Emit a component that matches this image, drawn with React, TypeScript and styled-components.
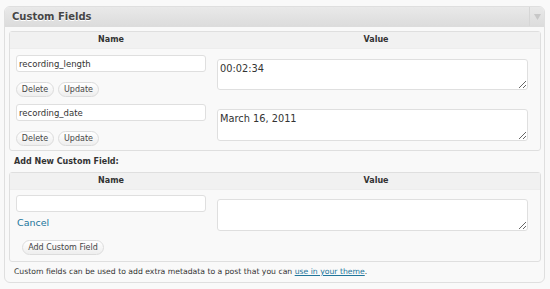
import React from "react";
import styled, { createGlobalStyle } from "styled-components";

const Global = createGlobalStyle`
  html, body { margin: 0; padding: 0; background: #f9f9f9; }
  body { font-family: "DejaVu Sans", Verdana, sans-serif; color: #333; }
`;

const Page = styled.div`
  width: 550px;
  height: 289px;
  padding: 6px 0 0 4px;
  box-sizing: border-box;
`;

const Postbox = styled.div`
  width: 541px;
  height: 277px;
  box-sizing: border-box;
  border: 1px solid #dfdfdf;
  border-radius: 6px;
  background: #f9f9f9;
  overflow: hidden;
  display: flex;
  flex-direction: column;
`;

const Header = styled.div`
  height: 20px;
  flex: none;
  display: flex;
  align-items: stretch;
  background: linear-gradient(#e9e9e9, #dcdcdc);
  border-bottom: 1px solid #dcdcdc;
  box-sizing: border-box;
`;

const Title = styled.h3`
  flex: 1;
  margin: 0;
  padding: 0 0 0 7px;
  font-size: 10px;
  font-weight: bold;
  color: #464646;
  line-height: 19px;
  text-shadow: 0 1px 0 #fff;
`;

const Toggle = styled.div`
  width: 15px;
  border-left: 1px solid #d6d6d6;
  display: flex;
  justify-content: center;
  padding-top: 7px;
  box-sizing: border-box;
`;

const Inside = styled.div`
  padding: 4px 3px 0 4px;
  display: flex;
  flex-direction: column;
`;

const Table = styled.div`
  border: 1px solid #dfdfdf;
  border-radius: 3px;
  background: #f9f9f9;
  display: flex;
  flex-direction: column;
`;

const HeadRow = styled.div`
  display: grid;
  grid-template-columns: 202px 1fr;
  height: 16px;
  background: #f1f1f1;
  border-bottom: 1px solid #ededed;
`;

const Th = styled.div`
  font-size: 8px;
  font-weight: bold;
  color: #333;
  line-height: 16px;
  text-align: center;
`;

const Row = styled.div<{ $pt: number; $h: number }>`
  display: grid;
  grid-template-columns: 202px 1fr;
  padding-top: ${(p) => p.$pt}px;
  height: ${(p) => p.$h}px;
  box-sizing: border-box;
`;

const NameCell = styled.div`
  padding-left: 6px;
  display: flex;
  flex-direction: column;
  align-items: flex-start;
`;

const ValueCell = styled.div<{ $pt: number }>`
  padding: ${(p) => p.$pt}px 0 0 5px;
`;

const TextInput = styled.input`
  width: 190px;
  height: 17px;
  box-sizing: border-box;
  border: 1px solid #dfdfdf;
  border-radius: 3px;
  background: #fff;
  font-family: "DejaVu Sans", sans-serif;
  font-size: 8.5px;
  color: #333;
  padding: 0 2px;
  margin: 0;
  outline: none;
`;

const TextArea = styled.textarea<{ $h: number }>`
  display: block;
  width: 311px;
  height: ${(p) => p.$h}px;
  box-sizing: border-box;
  border: 1px solid #dfdfdf;
  border-radius: 3px;
  background: #fff;
  font-family: "DejaVu Sans", sans-serif;
  font-size: 9.8px;
  color: #333;
  padding: 3px 2px;
  margin: 0;
  resize: both;
  outline: none;
`;

const Buttons = styled.div<{ $mt: number; $ml?: number }>`
  display: flex;
  gap: 4px;
  margin-top: ${(p) => p.$mt}px;
  margin-left: ${(p) => p.$ml ?? 0}px;
`;

const Button = styled.button<{ $w: number }>`
  width: ${(p) => p.$w}px;
  height: 15px;
  box-sizing: border-box;
  border: 1px solid #dcdcdc;
  border-radius: 8px;
  background: linear-gradient(#ffffff, #eeeeee);
  font-family: "DejaVu Sans", sans-serif;
  font-size: 8px;
  color: #464646;
  padding: 0;
  margin: 0;
  line-height: 13px;
`;

const SubTitle = styled.div`
  font-size: 8px;
  font-weight: bold;
  color: #333;
  padding: 6px 0 0 5px;
  height: 21px;
  box-sizing: border-box;
  line-height: 10px;
`;

const CancelLink = styled.a`
  font-size: 9.5px;
  color: #21759b;
  text-decoration: none;
  margin-top: 5px;
  margin-left: 1px;
`;

const Footer = styled.p`
  margin: 0;
  padding: 5px 0 0 5px;
  font-size: 7.7px;
  color: #333;
  line-height: 10px;
`;

const FooterLink = styled.a`
  color: #21759b;
  text-decoration: underline;
`;

export default function App() {
  return (
    <>
      <Global />
      <Page>
        <Postbox>
          <Header>
            <Title>Custom Fields</Title>
            <Toggle>
              <svg width="7" height="6" viewBox="0 0 7 6">
                <path d="M0 0 H7 L3.5 6 Z" fill="#c7c7c7" />
              </svg>
            </Toggle>
          </Header>
          <Inside>
            <Table>
              <HeadRow>
                <Th>Name</Th>
                <Th>Value</Th>
              </HeadRow>
              <Row $pt={6} $h={54}>
                <NameCell>
                  <TextInput defaultValue="recording_length" />
                  <Buttons $mt={10}>
                    <Button $w={38}>Delete</Button>
                    <Button $w={41}>Update</Button>
                  </Buttons>
                </NameCell>
                <ValueCell $pt={4}>
                  <TextArea $h={31} defaultValue="00:02:34" />
                </ValueCell>
              </Row>
              <Row $pt={1} $h={47}>
                <NameCell>
                  <TextInput defaultValue="recording_date" />
                  <Buttons $mt={10}>
                    <Button $w={38}>Delete</Button>
                    <Button $w={41}>Update</Button>
                  </Buttons>
                </NameCell>
                <ValueCell $pt={5}>
                  <TextArea $h={32} defaultValue="March 16, 2011" />
                </ValueCell>
              </Row>
            </Table>
            <SubTitle>Add New Custom Field:</SubTitle>
            <Table>
              <HeadRow>
                <Th>Name</Th>
                <Th>Value</Th>
              </HeadRow>
              <Row $pt={5} $h={71}>
                <NameCell>
                  <TextInput defaultValue="" />
                  <CancelLink href="#">Cancel</CancelLink>
                  <Buttons $mt={12} $ml={6}>
                    <Button $w={82}>Add Custom Field</Button>
                  </Buttons>
                </NameCell>
                <ValueCell $pt={4}>
                  <TextArea $h={32} defaultValue="" />
                </ValueCell>
              </Row>
            </Table>
            <Footer>
              Custom fields can be used to add extra metadata to a post that you can{" "}
              <FooterLink href="#">use in your theme</FooterLink>.
            </Footer>
          </Inside>
        </Postbox>
      </Page>
    </>
  );
}
